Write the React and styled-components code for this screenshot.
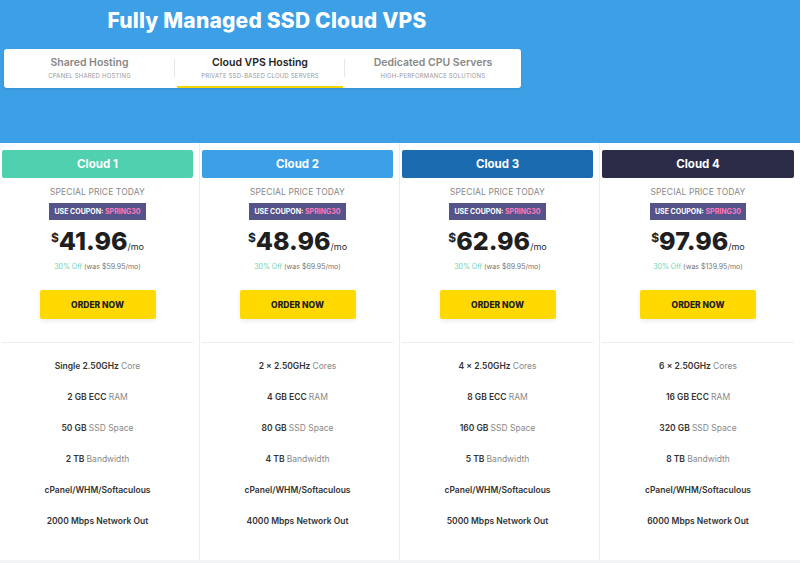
import React from 'react';
import styled, { createGlobalStyle } from 'styled-components';

const Global = createGlobalStyle`
  body { margin: 0; font-family: Inter, "Noto Sans", sans-serif; background: #f3f4f6; }
`;

const Hero = styled.div`
  height: 143px;
  background: #3d9fe6;
  padding: 8px 4px 0;
  box-sizing: border-box;
`;

const Title = styled.h1`
  margin: 0;
  width: 526px;
  text-align: center;
  color: #fff;
  font-size: 21px;
  font-weight: 800;
  letter-spacing: 0.2px;
  line-height: 26px;
`;

const Tabs = styled.div`
  margin-top: 15px;
  width: 517px;
  height: 39px;
  background: #fff;
  border-radius: 3px;
  display: grid;
  grid-template-columns: 171px 170px 1fr;
  box-shadow: 0 1px 3px rgba(0,0,0,0.1);
`;

const Tab = styled.div`
  display: flex;
  flex-direction: column;
  align-items: center;
  justify-content: center;
  position: relative;
  border-bottom: 2px solid ${p => (p.active ? '#f5d400' : 'transparent')};
  margin: 0 2px;
  &::after {
    content: '';
    display: ${p => (p.last ? 'none' : 'block')};
    position: absolute;
    right: -2px;
    top: 10px;
    height: 18px;
    border-right: 1px solid #e6e6e6;
  }
`;

const TabName = styled.div`
  font-size: 10.5px;
  font-weight: 600;
  color: ${p => (p.active ? '#222' : '#888')};
`;

const TabSub = styled.div`
  font-size: 6px;
  color: #999;
  margin-top: 3px;
  letter-spacing: 0.2px;
`;

const Plans = styled.div`
  display: grid;
  grid-template-columns: repeat(4, 1fr);
  background: #fff;
  height: 417px;
`;

const Col = styled.div`
  padding: 7px 6px 0 2px;
  border-right: 1px solid #ececec;
  display: flex;
  flex-direction: column;
  align-items: center;
  &:last-child { border-right: none; }
`;

const Head = styled.div`
  width: 100%;
  height: 28px;
  border-radius: 2px;
  background: ${p => p.bg};
  color: #fff;
  font-size: 11.5px;
  font-weight: 700;
  display: flex;
  align-items: center;
  justify-content: center;
`;

const Special = styled.div`
  margin-top: 9px;
  font-size: 8.5px;
  color: #888;
  letter-spacing: 0.1px;
`;

const Coupon = styled.div`
  margin-top: 6px;
  background: #54548a;
  color: #fff;
  font-size: 7px;
  font-weight: 700;
  padding: 4px 5px;
  span { color: #ff7ac0; }
`;

const Price = styled.div`
  margin-top: 6px;
  color: #1f1f1f;
  display: flex;
  align-items: baseline;
  sup { font-size: 12px; font-weight: 700; align-self: flex-start; margin-top: 4px; }
  b { font-size: 25px; font-weight: 800; }
  small { font-size: 9px; }
`;

const Off = styled.div`
  margin-top: 6px;
  font-size: 7px;
  color: #777;
  span { color: #6dd3b2; }
`;

const Order = styled.div`
  margin-top: 19px;
  width: 116px;
  height: 29px;
  background: #ffd900;
  border-radius: 2px;
  box-shadow: 0 2px 4px rgba(0,0,0,0.08);
  display: flex;
  align-items: center;
  justify-content: center;
  font-size: 8.5px;
  font-weight: 800;
  color: #222;
`;

const Divider = styled.div`
  margin-top: 23px;
  width: 100%;
  border-top: 1px solid #eee;
`;

const Features = styled.div`
  margin-top: 11px;
  display: flex;
  flex-direction: column;
  gap: 0;
  width: 100%;
`;

const Feature = styled.div`
  height: 31px;
  line-height: 24px;
  text-align: center;
  font-size: 8.5px;
  font-weight: 600;
  color: #333;
  span { color: #888; font-weight: 400; }
`;

const plans = [
  { name: 'Cloud 1', bg: '#50d0ae', price: '41.96', was: '59.95', core: 'Single 2.50GHz', coreW: 'Core', ram: '2 GB', ssd: '50 GB', bw: '2 TB', net: '2000' },
  { name: 'Cloud 2', bg: '#3d9fe6', price: '48.96', was: '69.95', core: '2 x 2.50GHz', coreW: 'Cores', ram: '4 GB', ssd: '80 GB', bw: '4 TB', net: '4000' },
  { name: 'Cloud 3', bg: '#1a6bb0', price: '62.96', was: '89.95', core: '4 x 2.50GHz', coreW: 'Cores', ram: '8 GB', ssd: '160 GB', bw: '5 TB', net: '5000' },
  { name: 'Cloud 4', bg: '#2b2c48', price: '97.96', was: '139.95', core: '6 x 2.50GHz', coreW: 'Cores', ram: '16 GB', ssd: '320 GB', bw: '8 TB', net: '6000' },
];

export default function App() {
  return (
    <>
      <Global />
      <Hero>
        <Title>Fully Managed SSD Cloud VPS</Title>
        <Tabs>
          <Tab>
            <TabName>Shared Hosting</TabName>
            <TabSub>CPANEL SHARED HOSTING</TabSub>
          </Tab>
          <Tab active>
            <TabName active>Cloud VPS Hosting</TabName>
            <TabSub>PRIVATE SSD-BASED CLOUD SERVERS</TabSub>
          </Tab>
          <Tab last>
            <TabName>Dedicated CPU Servers</TabName>
            <TabSub>HIGH-PERFORMANCE SOLUTIONS</TabSub>
          </Tab>
        </Tabs>
      </Hero>
      <Plans>
        {plans.map(p => (
          <Col key={p.name}>
            <Head bg={p.bg}>{p.name}</Head>
            <Special>SPECIAL PRICE TODAY</Special>
            <Coupon>USE COUPON: <span>SPRING30</span></Coupon>
            <Price><sup>$</sup><b>{p.price}</b><small>/mo</small></Price>
            <Off><span>30% Off</span> (was ${p.was}/mo)</Off>
            <Order>ORDER NOW</Order>
            <Divider />
            <Features>
              <Feature>{p.core} <span>{p.coreW}</span></Feature>
              <Feature>{p.ram} ECC <span>RAM</span></Feature>
              <Feature>{p.ssd} <span>SSD Space</span></Feature>
              <Feature>{p.bw} <span>Bandwidth</span></Feature>
              <Feature>cPanel/WHM/Softaculous</Feature>
              <Feature>{p.net} Mbps Network Out</Feature>
            </Features>
          </Col>
        ))}
      </Plans>
    </>
  );
}
